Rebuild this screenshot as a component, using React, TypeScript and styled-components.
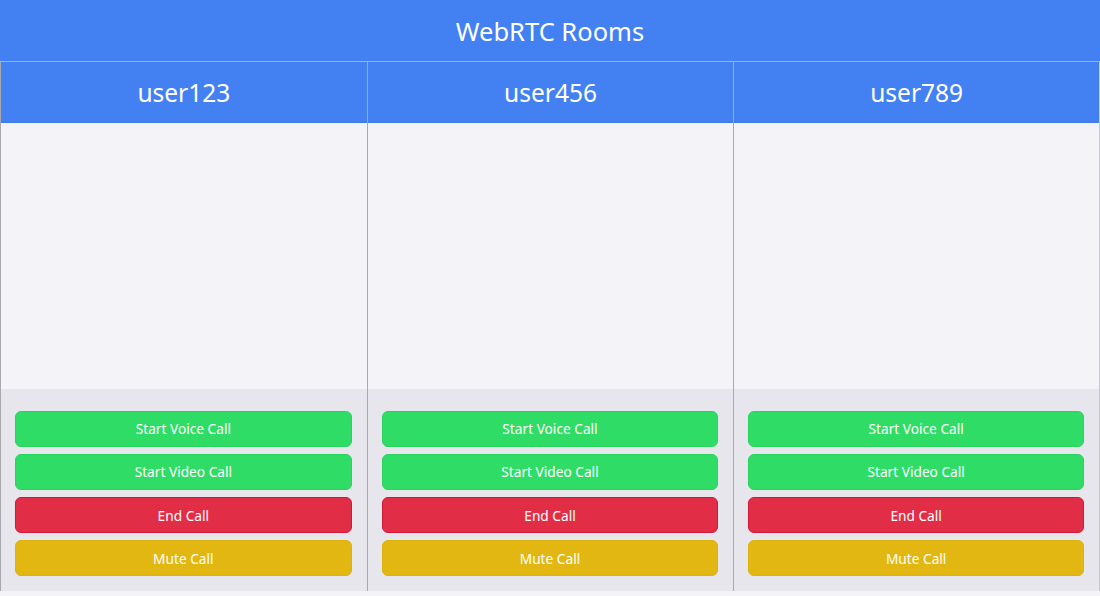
import React from "react";
import styled, { createGlobalStyle } from "styled-components";

const Global = createGlobalStyle`
  html, body { margin: 0; padding: 0; }
  body {
    background: #f3f3f8;
    font-family: "Noto Sans", "Open Sans", sans-serif;
  }
`;

const Page = styled.div`
  width: 1100px;
  display: flex;
  flex-direction: column;
`;

const TopBar = styled.header`
  height: 61px;
  background: #4381f2;
  color: #fff;
  display: flex;
  align-items: center;
  justify-content: center;
  font-size: 25.5px;
`;

const Rooms = styled.main`
  display: grid;
  grid-template-columns: repeat(3, 1fr);
  height: 529px;
  border-top: 1px solid #a9aec0;
`;

const Room = styled.section<{ $last?: boolean }>`
  display: flex;
  flex-direction: column;
  border-left: 1px solid #a8a8b0;
  border-right: ${(p) => (p.$last ? "1px solid #c8c8d0" : "none")};
  min-width: 0;
`;

const RoomHeader = styled.div`
  height: 60px;
  background: #4381f2;
  border-bottom: 1px solid #3f7ae8;
  color: #fff;
  display: flex;
  align-items: center;
  justify-content: center;
  font-size: 24.5px;
`;

const VideoArea = styled.div`
  flex: 1;
  background: #f3f3f8;
`;

const Controls = styled.div`
  height: 202px;
  box-sizing: border-box;
  background: #e6e6ec;
  padding: 22px 15px 15px 14px;
  display: flex;
  flex-direction: column;
  gap: 7.5px;
`;

const colors = {
  green: { bg: "#2fdd66", border: "#2bd260" },
  red: { bg: "#e12e46", border: "#d3193a" },
  yellow: { bg: "#e3b711", border: "#dcb20e" },
};

const CallButton = styled.button<{ $tone: keyof typeof colors }>`
  height: 36px;
  border-radius: 6px;
  border: 1px solid ${(p) => colors[p.$tone].border};
  background: ${(p) => colors[p.$tone].bg};
  color: #fff;
  font-family: inherit;
  font-size: 13.7px;
  cursor: pointer;
  padding: 0;
`;

const users = ["user123", "user456", "user789"];

export default function App() {
  return (
    <Page>
      <Global />
      <TopBar>WebRTC Rooms</TopBar>
      <Rooms>
        {users.map((u, i) => (
          <Room key={u} $last={i === users.length - 1}>
            <RoomHeader>{u}</RoomHeader>
            <VideoArea />
            <Controls>
              <CallButton $tone="green">Start Voice Call</CallButton>
              <CallButton $tone="green">Start Video Call</CallButton>
              <CallButton $tone="red">End Call</CallButton>
              <CallButton $tone="yellow">Mute Call</CallButton>
            </Controls>
          </Room>
        ))}
      </Rooms>
    </Page>
  );
}
